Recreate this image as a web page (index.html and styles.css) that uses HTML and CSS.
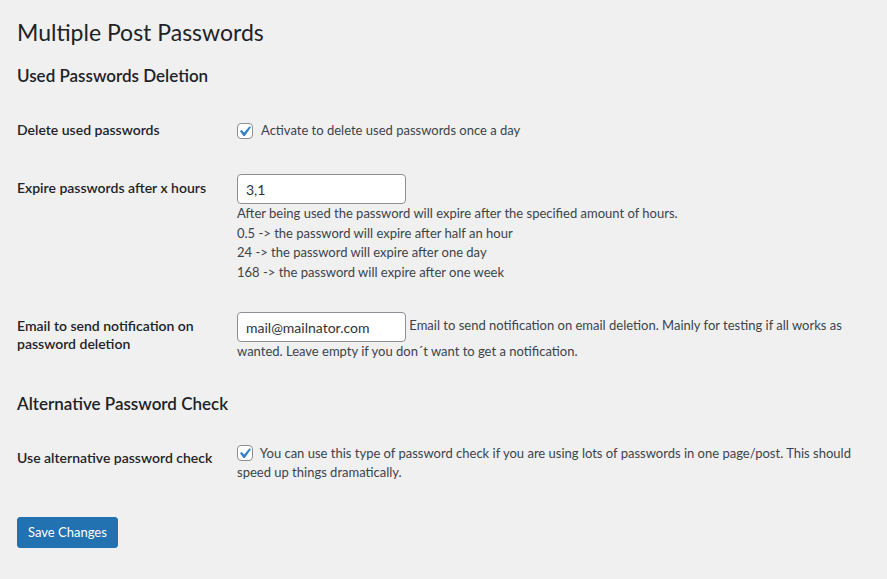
FILE: index.html
```html
<!DOCTYPE html>
<html lang="en">
<head>
<meta charset="utf-8">
<title>Multiple Post Passwords</title>
<link rel="stylesheet" href="styles.css">
</head>
<body>
<div class="wrap">
  <h1 class="page-title">Multiple Post Passwords</h1>

  <h2 class="section-title">Used Passwords Deletion</h2>
  <table class="form-table">
    <tr class="row-check">
      <th>Delete used passwords</th>
      <td>
        <label class="check-label">
          <span class="checkbox"><svg viewBox="2.9 1.9 15.2 15.2" width="16" height="16"><path d="M14.83 4.89l1.34.94-5.81 8.38H9.02L5.78 9.67l1.34-1.25 2.57 2.4z" fill="#3582c4"/></svg></span>
          Activate to delete used passwords once a day
        </label>
      </td>
    </tr>
    <tr>
      <th>Expire passwords after x hours</th>
      <td>
        <input class="text-input small" type="text" value="3,1">
        <p class="description">After being used the password will expire after the specified amount of hours.<br>0.5 -&gt; the password will expire after half an hour<br>24 -&gt; the password will expire after one day<br>168 -&gt; the password will expire after one week</p>
      </td>
    </tr>
    <tr>
      <th>Email to send notification on password deletion</th>
      <td class="inline-desc">
        <input class="text-input small" type="text" value="mail@mailnator.com">
        Email to send notification on email deletion. Mainly for testing if all works as wanted. Leave empty if you don´t want to get a notification.
      </td>
    </tr>
  </table>

  <h2 class="section-title">Alternative Password Check</h2>
  <table class="form-table">
    <tr>
      <th>Use alternative password check</th>
      <td class="inline-desc">
        <span class="checkbox"><svg viewBox="2.9 1.9 15.2 15.2" width="16" height="16"><path d="M14.83 4.89l1.34.94-5.81 8.38H9.02L5.78 9.67l1.34-1.25 2.57 2.4z" fill="#3582c4"/></svg></span>
        You can use this type of password check if you are using lots of passwords in one page/post. This should speed up things dramatically.
      </td>
    </tr>
  </table>

  <p class="submit"><button class="button-primary">Save Changes</button></p>
</div>
</body>
</html>
```

FILE: styles.css
```css
html, body {
  margin: 0;
  padding: 0;
  background: #f0f0f1;
}

body {
  font-family: "Segoe UI", Lato, "Liberation Sans", Arial, sans-serif;
  font-size: 13px;
  line-height: 1.4;
  color: #3c434a;
}

.wrap {
  padding: 8px 20px 0 17px;
}

.page-title {
  margin: 0;
  padding: 9px 0 4px;
  font-size: 23px;
  font-weight: 400;
  line-height: 30px;
  color: #1d2327;
}

.section-title {
  margin: 14px 0;
  font-size: 17px;
  font-weight: 600;
  line-height: 22px;
  color: #1d2327;
}

.section-title + .form-table {
  margin-top: 0;
}

.form-table + .section-title {
  margin-top: 16px;
}

.form-table {
  width: 100%;
  border-collapse: collapse;
  margin: 0;
}

.form-table th {
  width: 200px;
  padding: 20px 10px 20px 0;
  vertical-align: top;
  text-align: left;
  font-size: 14px;
  font-weight: 600;
  line-height: 18px;
  color: #1d2327;
}

.form-table td {
  padding: 15px 10px;
  vertical-align: top;
  font-size: 13px;
  line-height: 19.5px;
}

.check-label {
  display: flex;
  align-items: center;
  gap: 8px;
  height: 27px;
  padding-top: 1px;
}

.check-label .checkbox {
  margin: 0;
}

.checkbox {
  display: inline-flex;
  box-sizing: border-box;
  width: 16px;
  height: 16px;
  border: 1px solid #8c8f94;
  border-radius: 4px;
  background: #fff;
  vertical-align: middle;
  margin: -3px 4px 0 0;
  overflow: visible;
}

.checkbox svg {
  display: block;
  margin: -1px;
  overflow: visible;
}

.text-input {
  display: inline-block;
  box-sizing: border-box;
  height: 30px;
  margin: 0;
  padding: 0 8px;
  border: 1px solid #8c8f94;
  border-radius: 4px;
  background: #fff;
  color: #2c3338;
  font-family: inherit;
  font-size: 14px;
  line-height: 28px;
  vertical-align: middle;
  outline: none;
}

.text-input.small {
  width: 169px;
}

.description {
  margin: 0;
  font-size: 13px;
  line-height: 19.5px;
  color: #3c434a;
}

.inline-desc {
  color: #3c434a;
}

.submit {
  margin: 19px 0 0;
  padding: 0;
}

.button-primary {
  box-sizing: border-box;
  height: 31px;
  padding: 0 10px;
  border: 1px solid #2271b1;
  border-radius: 3px;
  background: #2271b1;
  color: #fff;
  font-family: inherit;
  font-size: 13px;
  line-height: 29px;
  cursor: pointer;
}
```
